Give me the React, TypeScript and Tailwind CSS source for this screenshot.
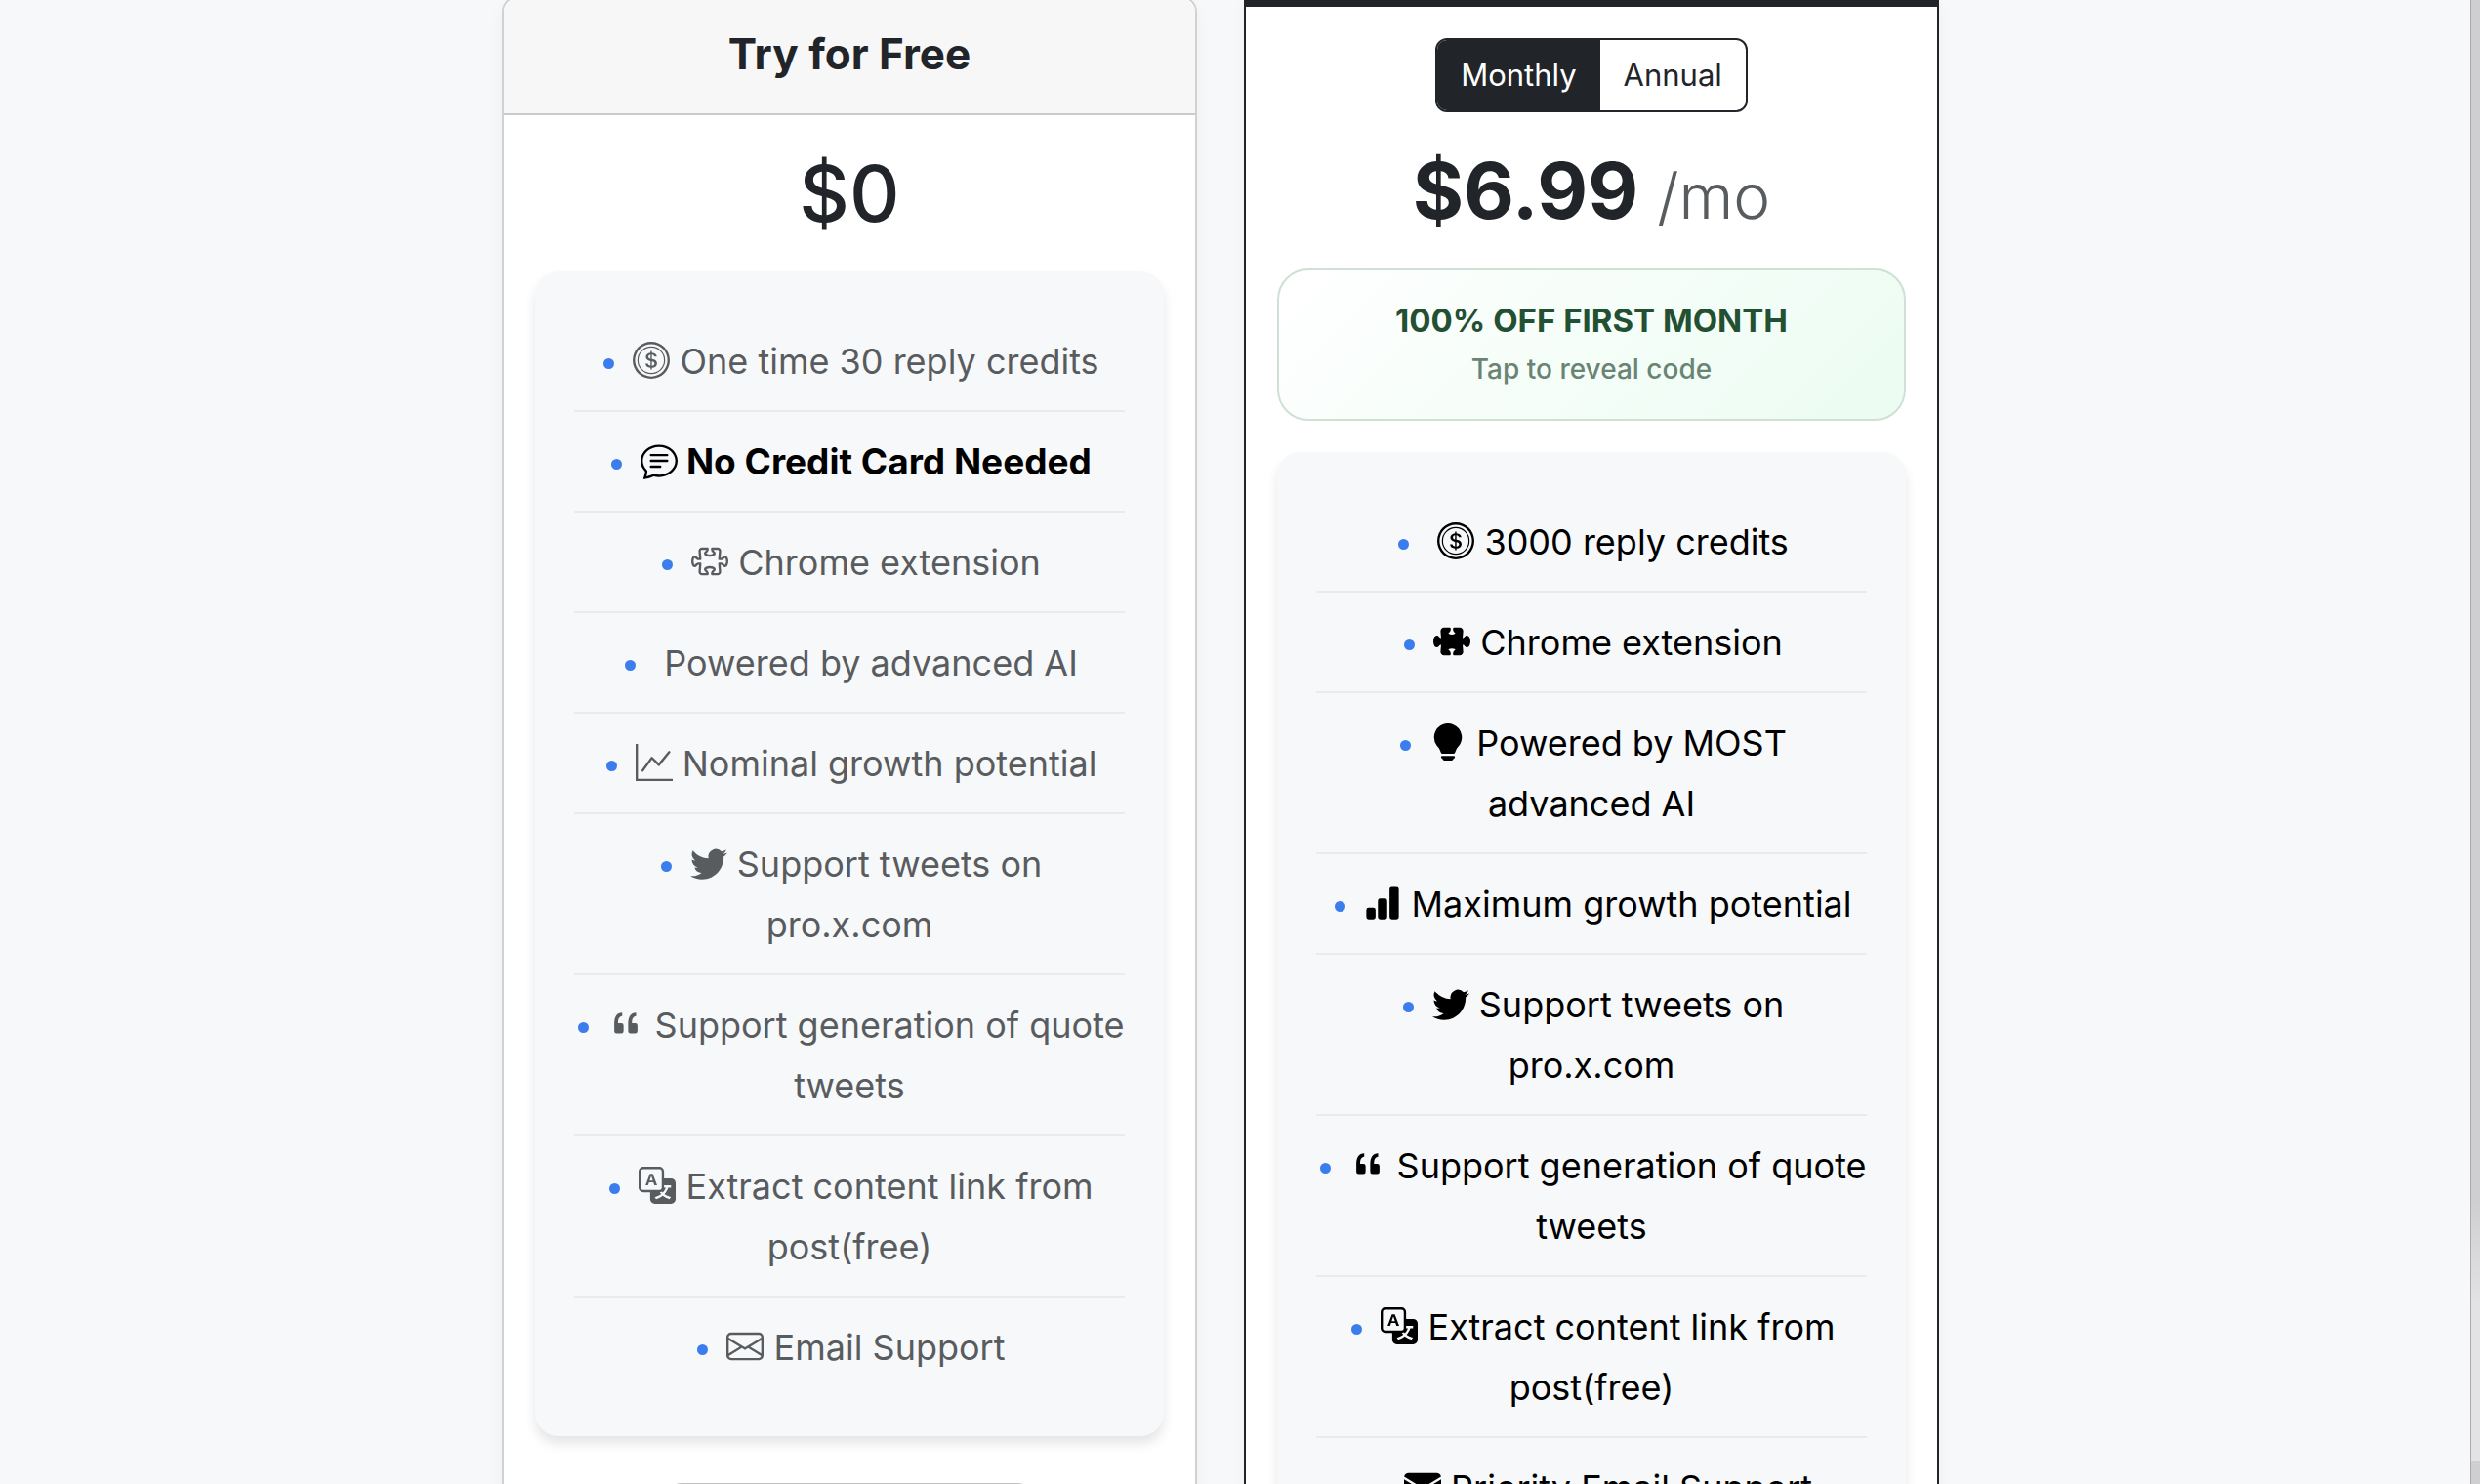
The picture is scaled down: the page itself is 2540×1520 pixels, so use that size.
import { useState } from "react";
import type { IconType } from "react-icons";
import {
  BsBarChartFill,
  BsChatText,
  BsCoin,
  BsEnvelope,
  BsEnvelopeFill,
  BsGraphUp,
  BsLightbulbFill,
  BsPuzzle,
  BsPuzzleFill,
  BsQuote,
  BsTranslate,
  BsTwitter,
} from "react-icons/bs";
import { clsx } from "clsx";

interface Feature {
  text: string;
  icon?: IconType;
  strong?: boolean;
  spaced?: boolean;
}

const freeFeatures: Feature[] = [
  { icon: BsCoin, text: "One time 30 reply credits" },
  { icon: BsChatText, text: "No Credit Card Needed", strong: true },
  { icon: BsPuzzle, text: "Chrome extension" },
  { text: "Powered by advanced AI" },
  { icon: BsGraphUp, text: "Nominal growth potential" },
  { icon: BsTwitter, text: "Support tweets on pro.x.com" },
  { icon: BsQuote, text: "Support generation of quote tweets" },
  { icon: BsTranslate, text: "Extract content link from post(free)" },
  { icon: BsEnvelope, text: "Email Support" },
];

const proFeatures: Feature[] = [
  { icon: BsCoin, text: "3000 reply credits", spaced: true },
  { icon: BsPuzzleFill, text: "Chrome extension" },
  { icon: BsLightbulbFill, text: "Powered by MOST advanced AI" },
  { icon: BsBarChartFill, text: "Maximum growth potential" },
  { icon: BsTwitter, text: "Support tweets on pro.x.com" },
  { icon: BsQuote, text: "Support generation of quote tweets" },
  { icon: BsTranslate, text: "Extract content link from post(free)" },
  { icon: BsEnvelopeFill, text: "Priority Email Support" },
];

function FeatureItem({ icon: Icon, text, strong, spaced }: Feature) {
  return (
    <li
      className={clsx(
        "border-b-2 border-[#e9ebed] pt-5 pb-[19px] last:border-b-0",
        strong && "text-[37px] font-bold text-black"
      )}
    >
      <span
        aria-hidden="true"
        className="mr-[19px] ml-1 inline-block size-[11px] rounded-full bg-[#3b7ded] align-[5px]"
      />
      {spaced && <>&nbsp;</>}
      {Icon && <Icon className="inline size-[38px] align-[-5px]" />} {text}
    </li>
  );
}

function FeatureList({ items, className }: { items: Feature[]; className: string }) {
  return (
    <ul
      className={clsx(
        "rounded-3xl bg-[#f7f8fa] px-10 pt-[41px] pb-[41px] text-center text-[36px] leading-[62px] shadow-[0_8px_12px_rgba(0,0,0,0.1)]",
        className
      )}
    >
      {items.map((item) => (
        <FeatureItem key={item.text} {...item} />
      ))}
    </ul>
  );
}

export default function App() {
  const [billing, setBilling] = useState<"monthly" | "annual">("monthly");

  return (
    <div className="flex h-screen overflow-hidden bg-[#f7f8fa] font-['Inter',sans-serif] text-[#212529]">
      <main className="flex-1 pr-[30px]">
        <div className="mx-auto flex max-w-[1472px] items-start gap-12">
          {/* Free plan */}
          <section className="-mt-1 flex-1 rounded-2xl border-2 border-[#d0d1d2] bg-white shadow-[0_4px_16px_rgba(0,0,0,0.04)]">
            <h4 className="rounded-t-2xl border-b-2 border-[#cacbcb] bg-[#f7f7f7] pt-7 pb-8 text-center text-[44px] leading-[58px] font-bold">
              Try for Free
            </h4>
            <div className="p-8">
              <h1 className="text-center text-[80px] leading-[96px] font-medium">$0</h1>
              <FeatureList items={freeFeatures} className="mt-8 text-[#595c5f]" />
              <button
                aria-label="Try for Free"
                className="mx-auto mt-12 block h-24 w-[376px] rounded-2xl border-2 border-[#bfc0c1] bg-white"
              />
            </div>
          </section>

          {/* Paid plan */}
          <section className="flex-1 border-x-2 border-[#212529] bg-white shadow-[0_4px_16px_rgba(0,0,0,0.04)]">
            <div className="h-[7px] bg-[#212529]" />
            <div className="p-8">
              <div className="flex justify-center">
                <div className="flex overflow-hidden rounded-xl border-2 border-[#212529] text-[31px] leading-[72px]">
                  <button
                    onClick={() => setBilling("monthly")}
                    className={clsx("px-6", billing === "monthly" && "bg-[#212529] text-white")}
                  >
                    Monthly
                  </button>
                  <button
                    onClick={() => setBilling("annual")}
                    className={clsx("px-6", billing === "annual" && "bg-[#212529] text-white")}
                  >
                    Annual
                  </button>
                </div>
              </div>
              <h1 className="mt-8 text-center text-[80px] leading-[96px] font-bold">
                $6.99 <small className="text-[64px] leading-none font-light text-[#595c5f]">/mo</small>
              </h1>
              <button className="mt-8 block w-full rounded-[32px] border-2 border-[#cfe0d4] bg-linear-135 from-white to-[#ebfcf2] py-[31px] text-center">
                <span className="block text-[33px] leading-[40px] font-bold text-[#234f33]">
                  100% OFF FIRST MONTH
                </span>
                <span className="mt-2.5 block text-[28px] leading-[40px] font-medium text-[#6a8474]">
                  Tap to reveal code
                </span>
              </button>
              <FeatureList items={proFeatures} className="mt-8 text-black" />
            </div>
          </section>
        </div>
      </main>

      {/* Scroll track */}
      <div className="flex w-[10px] flex-col border-l border-[#a9abac] bg-[#e3e3e3]">
        <div className="h-[88%] bg-linear-to-b from-[#cfcfcf] from-92% to-[#e3e3e3]" />
        <div className="mt-auto h-6 bg-[#cfcfcf]" />
      </div>
    </div>
  );
}
